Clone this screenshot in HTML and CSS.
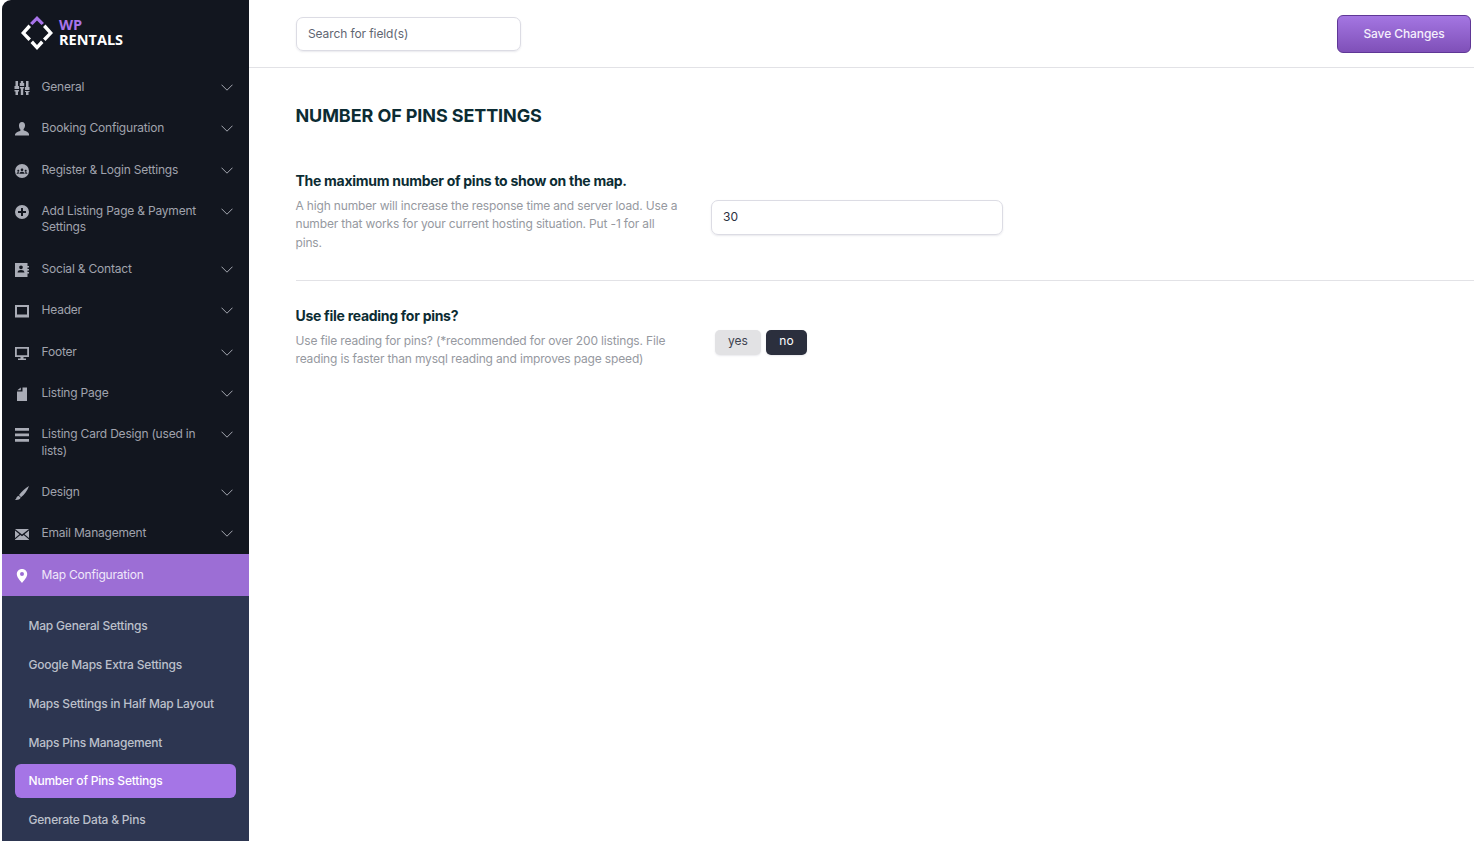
FILE: index.html
```html
<!DOCTYPE html>
<html lang="en">
<head>
<meta charset="utf-8">
<title>WP Rentals - Number of Pins Settings</title>
<link rel="stylesheet" href="styles.css">
</head>
<body>
<div class="app">
<aside class="sidebar">
  <div class="logo">
    <svg class="logo-mark" width="34" height="36" viewBox="0 0 34 36">
      <path d="M17 1 L24 8 L21.5 10 L17 5.500 L12.500 10 L10 8 Z" fill="#a874ea"/>
      <path d="M8.500 9.500 L1 18 L8.500 26 L11 23.500 L5.500 18 L11 12 Z" fill="#fff"/>
      <path d="M25.500 9.500 L33 18 L25.500 26 L23 23.500 L28.500 18 L23 12 Z" fill="#fff"/>
      <path d="M10.500 28 L17 35 L23.500 28 L21 25.500 L17 30 L13 25.500 Z" fill="#fff"/>
    </svg>
    <div class="logo-text"><span class="logo-wp">WP</span><span class="logo-rentals">RENTALS</span></div>
  </div>
  <nav class="menu">
    <div class="item"><svg class="ico" viewBox="0 0 16 16"><path d="M1.500 1h2.500v5h1v3H.5V6h1zM.5 10h4.500v1.500H4V15H1.500v-3.500H.5zM6.800 1h2.400v2h1v3H5.800V3h1zM5.800 7h4.400v1.500H9.200V15H6.800V8.500h-1zM12 1h2.500v6h1v3H11V7h1zM11 11h4.500v1h-1v3H12v-3h-1z"/></svg><span class="label">General</span><svg class="chev" viewBox="0 0 12 7"><path d="M.5.7 6 6.200 11.500.7"/></svg></div>
    <div class="item"><svg class="ico" viewBox="0 0 16 16"><path d="M8 1c2 0 3 1.500 3 3.500 0 1.500-.6 2.800-1.300 3.500-.3.400-.2 1.200.3 1.500 2 .8 4.500 1.500 5 3.500v1.500H1V13.500c.5-2 3-2.700 5-3.500.5-.3.600-1.100.3-1.500C5.600 7.800 5 6.500 5 4.500 5 2.500 6 1 8 1z"/></svg><span class="label">Booking Configuration</span><svg class="chev" viewBox="0 0 12 7"><path d="M.5.7 6 6.200 11.500.7"/></svg></div>
    <div class="item"><svg class="ico" viewBox="0 0 16 16"><path fill-rule="evenodd" d="M8 1a7 7 0 1 1 0 14A7 7 0 0 1 8 1zM8 5.500c-.8 0-1.300.6-1.300 1.300S7.200 8.200 8 8.200s1.300-.6 1.300-1.400S8.800 5.500 8 5.500zM4.300 6.800c-.6 0-1 .5-1 1s.4 1 1 1 1-.5 1-1-.4-1-1-1zM11.700 6.800c-.6 0-1 .5-1 1s.4 1 1 1 1-.5 1-1-.4-1-1-1zM8 8.800c-1.500 0-2.500.8-2.700 2h5.400c-.2-1.200-1.200-2-2.700-2zM4.300 9.200c-.8 0-1.500.4-1.700 1.500h2c.1-.6.300-1 .6-1.300-.3-.1-.6-.2-.9-.2zM11.700 9.200c-.3 0-.6.100-.9.2.3.3.5.700.6 1.300h2c-.2-1.100-.9-1.500-1.700-1.500z"/></svg><span class="label">Register &amp; Login Settings</span><svg class="chev" viewBox="0 0 12 7"><path d="M.5.7 6 6.200 11.500.7"/></svg></div>
    <div class="item"><svg class="ico" viewBox="0 0 16 16"><path fill-rule="evenodd" d="M8 1a7 7 0 1 1 0 14A7 7 0 0 1 8 1zM7 4v3H4v2h3v3h2V9h3V7H9V4z"/></svg><span class="label">Add Listing Page &amp; Payment Settings</span><svg class="chev" viewBox="0 0 12 7"><path d="M.5.7 6 6.200 11.500.7"/></svg></div>
    <div class="item"><svg class="ico" viewBox="0 0 16 16"><path fill-rule="evenodd" d="M1 1h12.500v3H15v1.500h-1.500V7H15v1.500h-1.500V10H15v1.500h-1.500V15H1zM7 3.500c-1.100 0-1.800.8-1.800 1.800S5.900 7.300 7 7.300s1.800-.9 1.800-2S8.100 3.500 7 3.500zM7 8C5 8 3.700 8.800 3.500 10.500h7C10.300 8.800 9 8 7 8z"/></svg><span class="label">Social &amp; Contact</span><svg class="chev" viewBox="0 0 12 7"><path d="M.5.7 6 6.200 11.500.7"/></svg></div>
    <div class="item"><svg class="ico" viewBox="0 0 16 16"><path fill-rule="evenodd" d="M1 2h14v12.500H1zM3 4v7.500h10V4z"/></svg><span class="label">Header</span><svg class="chev" viewBox="0 0 12 7"><path d="M.5.7 6 6.200 11.500.7"/></svg></div>
    <div class="item"><svg class="ico" viewBox="0 0 16 16"><path fill-rule="evenodd" d="M1 2h14v10H9.500v1.500H12V15H4v-1.500h2.500V12H1zM2.800 3.700v6.600h10.400V3.700z"/></svg><span class="label">Footer</span><svg class="chev" viewBox="0 0 12 7"><path d="M.5.7 6 6.200 11.500.7"/></svg></div>
    <div class="item"><svg class="ico" viewBox="0 0 16 16"><path d="M8.500 1.500H13V15H3V5.500h5.500zM3.300 4.300 6.800 1.500v2.800z"/></svg><span class="label">Listing Page</span><svg class="chev" viewBox="0 0 12 7"><path d="M.5.7 6 6.200 11.500.7"/></svg></div>
    <div class="item"><svg class="ico" viewBox="0 0 16 16"><path d="M1 1h14v2.800H1zM1 6.500h14v2.800H1zM1 12h14v2.800H1z"/></svg><span class="label">Listing Card Design (used in lists)</span><svg class="chev" viewBox="0 0 12 7"><path d="M.5.7 6 6.200 11.500.7"/></svg></div>
    <div class="item"><svg class="ico" viewBox="0 0 16 16"><path d="M15 1C11.500 3 7.500 6.500 5 10l2 2.200C10.500 9.500 13.500 5.500 15 1zM4.500 10.800c-1.300.4-1.800 1.300-2.100 2.300-.2.800-.7 1.400-1.400 1.900 2.500.2 5-.3 5.700-2.400z"/></svg><span class="label">Design</span><svg class="chev" viewBox="0 0 12 7"><path d="M.5.7 6 6.200 11.500.7"/></svg></div>
    <div class="item"><svg class="ico" viewBox="0 0 16 16"><path d="M1 3h14L8 8.500zM1 4.500l4.500 3.700L1 12zM15 4.500l-4.500 3.700L15 12zM6.300 9 8 10.300 9.700 9 15 13.500V14H1v-.5z"/></svg><span class="label">Email Management</span><svg class="chev" viewBox="0 0 12 7"><path d="M.5.7 6 6.200 11.500.7"/></svg></div>
    <div class="item item-active"><svg class="ico" viewBox="0 0 16 16"><path fill-rule="evenodd" d="M8 1c3 0 5.200 2.200 5.200 5 0 3.300-3.300 6.600-5.200 9-1.900-2.400-5.200-5.700-5.200-9C2.800 3.200 5 1 8 1zM8 4a2 2 0 1 0 0 4 2 2 0 0 0 0-4z"/></svg><span class="label">Map Configuration</span></div>
  </nav>
  <div class="submenu">
    <div class="sub">Map General Settings</div>
    <div class="sub">Google Maps Extra Settings</div>
    <div class="sub">Maps Settings in Half Map Layout</div>
    <div class="sub">Maps Pins Management</div>
    <div class="sub sub-active">Number of Pins Settings</div>
    <div class="sub">Generate Data &amp; Pins</div>
  </div>
</aside>
<main class="main">
  <header class="topbar">
    <div class="search">Search for field(s)</div>
    <button class="save">Save Changes</button>
  </header>
  <section class="content">
    <h1 class="title">NUMBER OF PINS SETTINGS</h1>
    <div class="row row-first">
      <div class="info">
        <h2 class="field-title">The maximum number of pins to show on the map.</h2>
        <p class="desc">A high number will increase the response time and server load. Use a number that works for your current hosting situation. Put -1 for all pins.</p>
      </div>
      <div class="control"><div class="input">30</div></div>
    </div>
    <div class="row row-second">
      <div class="info">
        <h2 class="field-title">Use file reading for pins?</h2>
        <p class="desc">Use file reading for pins? (*recommended for over 200 listings. File reading is faster than mysql reading and improves page speed)</p>
      </div>
      <div class="toggle"><span class="opt">yes</span><span class="opt opt-on">no</span></div>
    </div>
  </section>
</main>
</div>
</body>
</html>
```
FILE: styles.css
```css
* { box-sizing: border-box; }
html, body { margin: 0; height: 100%; }
body { background: #fff; font-family: Inter, "Liberation Sans", sans-serif; overflow: hidden; }
.app { display: flex; height: 841px; padding-left: 2px; }

.sidebar { width: 247px; flex: none; height: 841px; background: #12161f; border-top-left-radius: 9px; overflow: hidden; }
.logo { height: 66.6px; display: flex; align-items: flex-start; padding: 15px 0 0 18px; gap: 5px; }
.logo-mark { flex: none; }
.logo-text { display: flex; flex-direction: column; font-family: "Open Sans", sans-serif; font-weight: 700; font-size: 14.5px; line-height: 15px; padding-top: 1.5px; }
.logo-wp { color: #a874ea; }
.logo-rentals { color: #fff; }

.item { display: flex; align-items: flex-start; padding: 12.5px 16px 12.5px 11.5px; color: #a0a3ad; font-size: 12px; letter-spacing: -.2px; line-height: 16.35px; }
.item .ico { width: 16px; height: 16px; flex: none; fill: #a9acb6; margin: 1px 12px -2px 0; }
.label { flex: 1; padding-right: 16px; }
.chev { width: 12px; height: 7px; flex: none; margin-top: 5px; fill: none; stroke: #a4a7b0; stroke-width: 1; }
.item-active { background: #9c6ed5; color: #f0e8fa; height: 42px; }
.item-active .ico { fill: #fff; }

.submenu { background: #2d3651; height: 245px; padding: 12.7px 13px 0; display: flex; flex-direction: column; gap: 4.8px; }
.sub { height: 34px; flex: none; display: flex; align-items: center; padding-left: 13.5px; border-radius: 6px; color: #bcc0cb; font-size: 12px; letter-spacing: -.2px; font-weight: 500; }
.sub-active { background: #a575e6; color: #fff; }

.main { flex: 1; min-width: 0; }
.topbar { height: 68px; border-bottom: 1px solid #e2e2e6; display: flex; align-items: flex-start; justify-content: space-between; padding: 15px 3px 0 47px; }
.search { width: 225px; height: 34px; margin-top: 2px; border: 1px solid #dcdce4; border-radius: 7px; box-shadow: 0 1px 2px rgba(40, 40, 80, .1); padding-left: 11px; font-size: 12px; letter-spacing: -.1px; line-height: 32px; color: #5f6672; }
.save { width: 134px; height: 38px; border: 1px solid #5f3796; border-radius: 6px; background: linear-gradient(#a476e2, #7f50b8); color: #f5effc; font-family: Inter, sans-serif; font-size: 12px; letter-spacing: -.1px; font-weight: 500; padding: 0 0 2px; }

.content { padding: 37px 0 0 46.5px; }
.title { margin: 0; font-size: 18px; line-height: 22px; font-weight: 700; letter-spacing: -.1px; color: #0c2c33; }
.field-title { margin: 0 0 6.8px; font-size: 14px; line-height: 18px; font-weight: 700; letter-spacing: -.28px; color: #0c2c33; }
.desc { margin: 0; font-size: 12px; letter-spacing: -.16px; line-height: 18.5px; color: #96999f; }
.row { display: flex; align-items: flex-start; }
.info { width: 385px; flex: none; }
.row-first { margin-top: 45px; padding-bottom: 27.9px; border-bottom: 1px solid #e2e2e6; }
.row-second { padding-top: 26px; }
.control { margin: 28px 0 0 30.5px; }
.input { width: 292px; height: 35px; border: 1px solid #dcdce4; border-radius: 7px; box-shadow: 0 1px 2px rgba(40, 40, 80, .1); padding-left: 11px; font-size: 12px; line-height: 32px; color: #2b3040; }
.toggle { display: flex; gap: 5px; margin: 23px 0 0 34.5px; }
.opt { height: 25px; width: 46px; border-radius: 5px; background: #e2e2e4; color: #3d4250; font-size: 12px; line-height: 22px; text-align: center; box-shadow: 0 1px 2px rgba(40, 40, 80, .1); }
.opt-on { width: 41px; background: #2b2f3d; color: #fff; }
```
